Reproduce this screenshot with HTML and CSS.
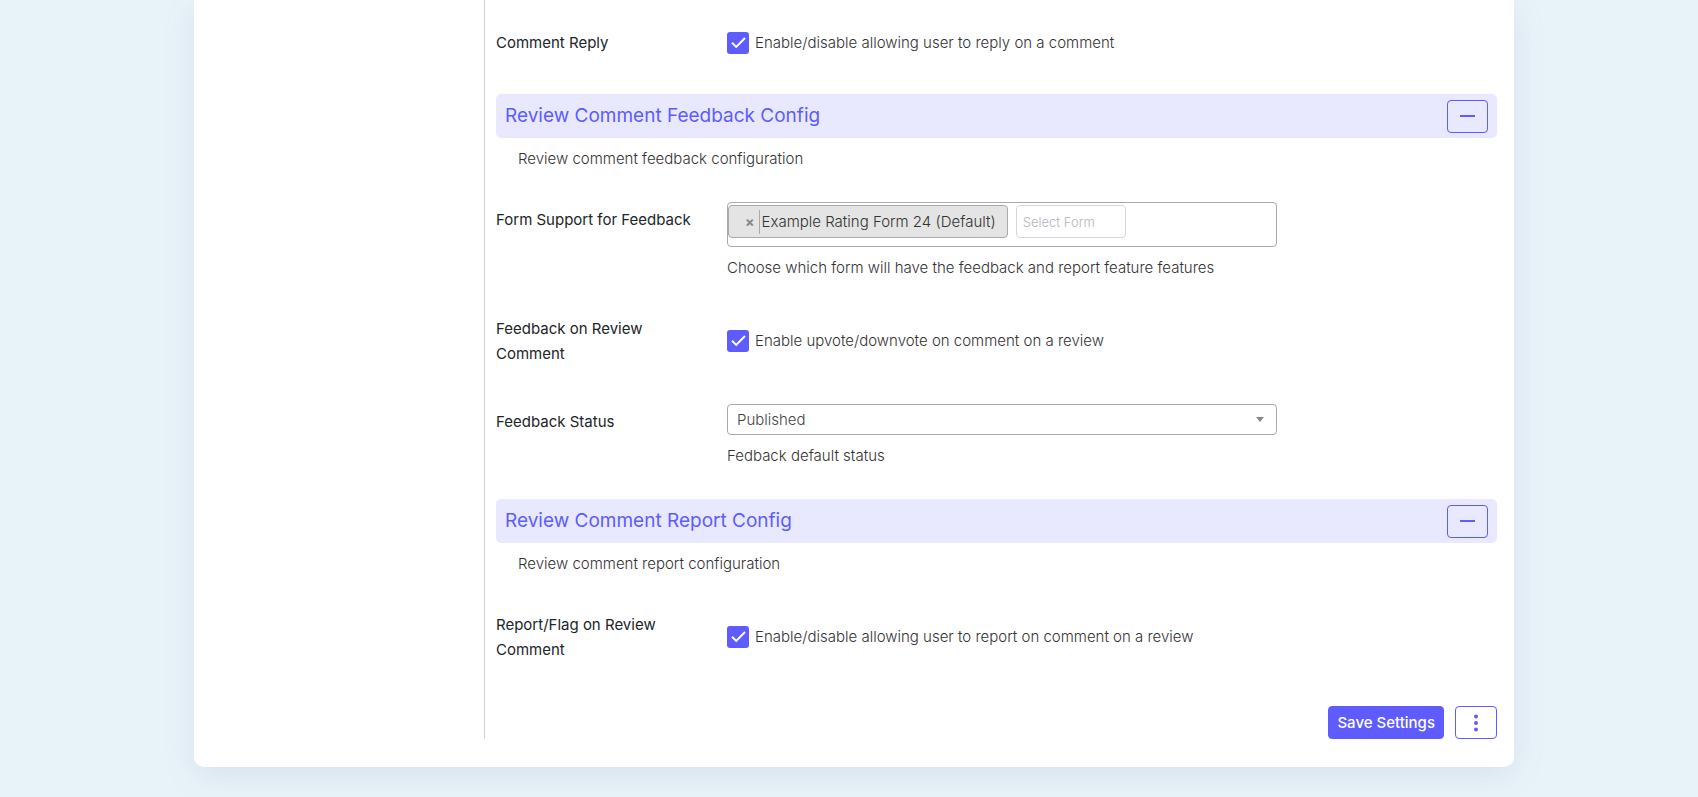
FILE: index.html
```html
<!DOCTYPE html>
<html lang="en">
<head>
<meta charset="utf-8">
<title>Review Comment Settings</title>
<link rel="stylesheet" href="styles.css">
</head>
<body>
<main class="card">
  <aside class="sidebar"></aside>
  <form class="settings">
    <div class="row row-first">
      <label class="row-label" for="reply">Comment Reply</label>
      <label class="toggle">
        <span class="check"><input type="checkbox" id="reply" checked><svg viewBox="0 0 22 22" aria-hidden="true"><path d="M5 10.8 9.2 14.9 18 6"/></svg></span>
        Enable/disable allowing user to reply on a comment
      </label>
    </div>

    <section>
      <header class="section-bar">
        <h2>Review Comment Feedback Config</h2>
        <button type="button" class="btn btn-outline" aria-label="Collapse feedback config"><svg width="15" height="16" viewBox="0 0 15 16" aria-hidden="true"><path d="M0 8H15" stroke="currentColor" stroke-width="2"/></svg></button>
      </header>
      <p class="section-text">Review comment feedback configuration</p>

      <div class="row row-field">
        <label class="row-label" for="form-search">Form Support for Feedback</label>
        <div>
          <div class="multi">
            <span class="tag"><button type="button" class="tag-remove" aria-label="Remove">×</button><span class="tag-text">Example Rating Form 24 (Default)</span></span>
            <input class="multi-search" type="text" id="form-search" placeholder="Select Form">
          </div>
          <p class="help">Choose which form will have the feedback and report feature features</p>
        </div>
      </div>

      <div class="row">
        <label class="row-label" for="vote">Feedback on Review Comment</label>
        <label class="toggle">
          <span class="check"><input type="checkbox" id="vote" checked><svg viewBox="0 0 22 22" aria-hidden="true"><path d="M5 10.8 9.2 14.9 18 6"/></svg></span>
          Enable upvote/downvote on comment on a review
        </label>
      </div>

      <div class="row row-field">
        <label class="row-label" for="status">Feedback Status</label>
        <div>
          <div class="select-wrap">
            <select id="status"><option>Published</option></select>
            <svg width="8" height="5" viewBox="0 0 8 5" aria-hidden="true"><path d="M0 0H8L4 5Z" fill="#888"/></svg>
          </div>
          <p class="help">Fedback default status</p>
        </div>
      </div>
    </section>

    <section>
      <header class="section-bar">
        <h2>Review Comment Report Config</h2>
        <button type="button" class="btn btn-outline" aria-label="Collapse report config"><svg width="15" height="16" viewBox="0 0 15 16" aria-hidden="true"><path d="M0 8H15" stroke="currentColor" stroke-width="2"/></svg></button>
      </header>
      <p class="section-text">Review comment report configuration</p>

      <div class="row">
        <label class="row-label" for="report">Report/Flag on Review Comment</label>
        <label class="toggle">
          <span class="check"><input type="checkbox" id="report" checked><svg viewBox="0 0 22 22" aria-hidden="true"><path d="M5 10.8 9.2 14.9 18 6"/></svg></span>
          Enable/disable allowing user to report on comment on a review
        </label>
      </div>
    </section>

    <footer class="actions">
      <button type="submit" class="btn btn-primary">Save Settings</button>
      <button type="button" class="btn btn-outline" aria-label="More actions"><svg width="16" height="18" viewBox="0 0 16 18" fill="currentColor" aria-hidden="true"><circle cx="8" cy="2.5" r="2"/><circle cx="8" cy="9" r="2"/><circle cx="8" cy="15.5" r="2"/></svg></button>
    </footer>
  </form>
</main>
</body>
</html>
```
FILE: styles.css
```css
* { box-sizing: border-box; }

body {
  margin: 0;
  padding: 0 0 30px 10px;
  background: #e8f3f9;
  color: #333;
  font: 300 15px/24px Inter, "Liberation Sans", sans-serif;
}

h2, p { margin: 0; }

button, input, select { font: inherit; color: inherit; }

.card {
  display: grid;
  grid-template-columns: 290px 1fr;
  max-width: 1320px;
  margin: 0 auto;
  padding: 0 17px 28px 0;
  background: #fff;
  border-radius: 0 0 10px 10px;
  box-shadow: 0 8px 32px rgba(90, 110, 160, 0.12);
}

.settings {
  padding-left: 11px;
  border-left: 1px solid #ced4da;
}

.row {
  display: grid;
  grid-template-columns: 207px 1fr;
  column-gap: 24px;
  align-items: center;
  margin-top: 36px;
}

.row-first { margin-top: 0; padding-top: 30px; }

.row-field { align-items: start; margin-top: 31px; }

.row + .row-field { margin-top: 38px; }

.row-field .row-label { padding-top: 5px; }

.row-label {
  color: #212529;
  font-weight: 400;
  line-height: 25px;
}

.toggle {
  display: flex;
  align-items: center;
  gap: 6px;
}

.check {
  display: grid;
  width: 22px;
  height: 22px;
}

.check input {
  grid-area: 1 / 1;
  appearance: none;
  width: 22px;
  height: 22px;
  margin: 0;
  border-radius: 3px;
  background: #5e5cff;
}

.check svg {
  grid-area: 1 / 1;
  z-index: 1;
  pointer-events: none;
  fill: none;
  stroke: #fff;
  stroke-width: 2;
}

.section-bar {
  display: flex;
  align-items: center;
  justify-content: space-between;
  height: 44px;
  margin-top: 39px;
  padding: 0 9px;
  background: #e8e8fe;
  border-radius: 5px;
  color: #5e5cff;
}

section + section .section-bar { margin-top: 31px; }

.section-bar h2 {
  font-size: 19px;
  font-weight: 400;
}

.section-text { margin: 9px 0 0 22px; }

.help { margin-top: 9px; }

.btn {
  display: flex;
  align-items: center;
  justify-content: center;
  height: 33px;
  border: 1px solid #5e5cff;
  border-radius: 4px;
}

.btn-outline {
  padding: 0 12px;
  background: transparent;
  color: #5e5cff;
}

.btn-primary {
  padding: 0 8px;
  background: #5e5cff;
  color: #fff;
  font-weight: 500;
}

.multi {
  display: flex;
  gap: 8px;
  max-width: 550px;
  height: 45px;
  padding-top: 2px;
  border: 1px solid #aaa;
  border-radius: 4px;
}

.tag {
  display: flex;
  align-items: center;
  height: 33px;
  padding: 0 11px 0 12px;
  background: #e4e4e4;
  border: 1px solid #aaa;
  border-radius: 4px;
}

.tag-remove {
  height: 24px;
  padding: 0 4px;
  background: none;
  border: 0;
  border-right: 1px solid #aaa;
  color: #888;
  font-size: 14px;
  font-weight: 700;
}

.tag-text { padding-left: 2px; }

.multi-search {
  width: 110px;
  height: 33px;
  padding: 0 6px;
  background: #fff;
  border: 1px solid #d4d6de;
  border-radius: 4px;
  font-size: 13px;
}

.multi-search::placeholder { color: #b4b4b8; opacity: 1; }

.select-wrap {
  display: grid;
  align-items: center;
  max-width: 550px;
}

.select-wrap select {
  grid-area: 1 / 1;
  appearance: none;
  height: 31px;
  padding: 0 30px 0 9px;
  background: #fff;
  border: 1px solid #aaa;
  border-radius: 4px;
  color: #444;
}

.select-wrap svg {
  grid-area: 1 / 1;
  justify-self: end;
  margin-right: 13px;
  pointer-events: none;
}

.actions {
  display: flex;
  justify-content: flex-end;
  gap: 11px;
  margin-top: 44px;
}
```
